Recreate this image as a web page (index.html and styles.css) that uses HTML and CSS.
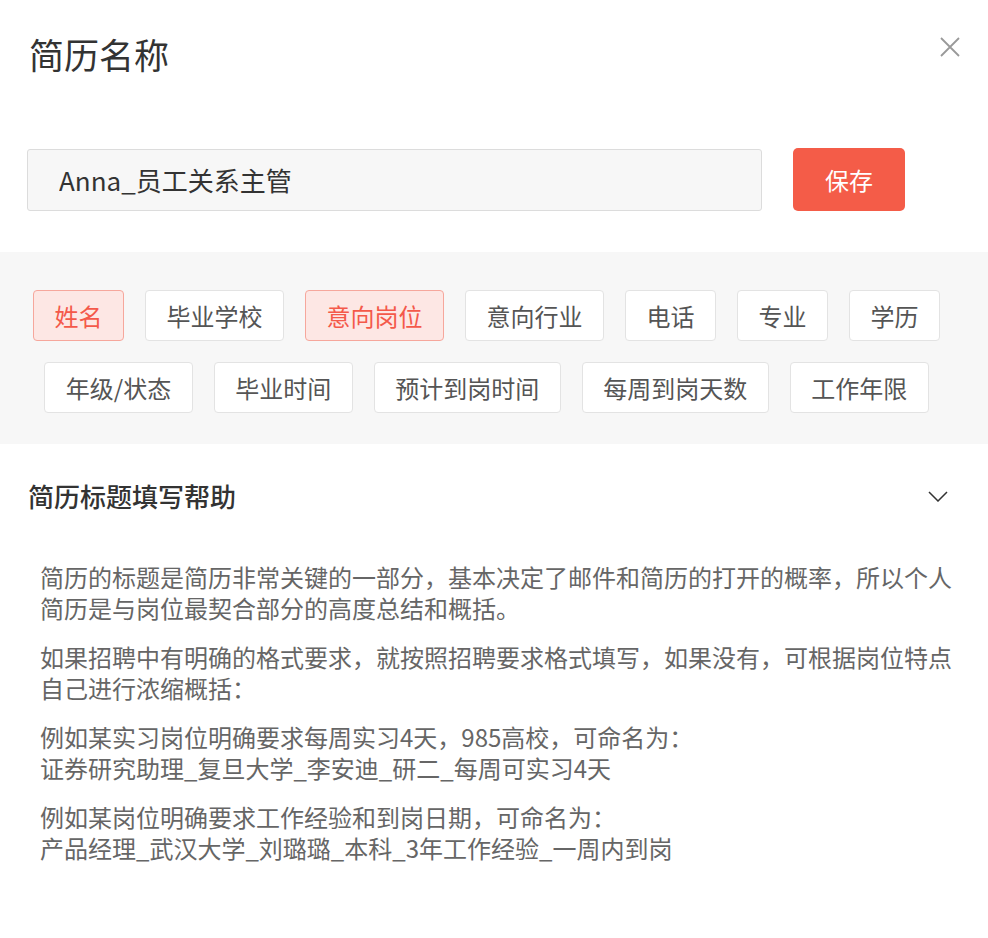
FILE: index.html
```html
<!DOCTYPE html>
<html lang="zh-CN">
<head>
  <meta charset="UTF-8">
  <title>简历名称</title>
  <link rel="stylesheet" href="styles.css">
</head>
<body>
  <div class="header">
    <h1 class="title">简历名称</h1>
    <svg class="close" width="20" height="20" viewBox="0 0 20 20">
      <path d="M1 1L19 19M19 1L1 19" stroke="#999" stroke-width="1.8" fill="none"/>
    </svg>
  </div>

  <div class="name-row">
    <input class="name-input" type="text" value="Anna_员工关系主管">
    <button class="save-btn" type="button">保存</button>
  </div>

  <div class="tags">
    <span class="tag active">姓名</span>
    <span class="tag">毕业学校</span>
    <span class="tag active">意向岗位</span>
    <span class="tag">意向行业</span>
    <span class="tag">电话</span>
    <span class="tag">专业</span>
    <span class="tag">学历</span>
    <span class="tag">年级/状态</span>
    <span class="tag">毕业时间</span>
    <span class="tag">预计到岗时间</span>
    <span class="tag">每周到岗天数</span>
    <span class="tag">工作年限</span>
  </div>

  <div class="help-head">
    <h2 class="help-title">简历标题填写帮助</h2>
    <svg class="chevron" width="20" height="11" viewBox="0 0 20 11">
      <path d="M1 1L10 10L19 1" stroke="#333" stroke-width="1.5" fill="none"/>
    </svg>
  </div>

  <div class="help-body">
    <p>简历的标题是简历非常关键的一部分，基本决定了邮件和简历的打开的概率，所以个人简历是与岗位最契合部分的高度总结和概括。</p>
    <p>如果招聘中有明确的格式要求，就按照招聘要求格式填写，如果没有，可根据岗位特点自己进行浓缩概括：</p>
    <p class="example">例如某实习岗位明确要求每周实习4天，985高校，可命名为：
证券研究助理_复旦大学_李安迪_研二_每周可实习4天</p>
    <p class="example">例如某岗位明确要求工作经验和到岗日期，可命名为：
产品经理_武汉大学_刘璐璐_本科_3年工作经验_一周内到岗</p>
  </div>
</body>
</html>
```

FILE: styles.css
```css
body {
  margin: 0;
  background: #fff;
  font-family: "Noto Sans CJK SC", "Noto Sans", sans-serif;
  color: #333;
}

.header {
  display: flex;
  justify-content: space-between;
  align-items: flex-start;
  padding: 29px 28px 0 29px;
}

.title {
  margin: 0;
  font-size: 35px;
  font-weight: normal;
  line-height: 49px;
  color: #333;
}

.close {
  margin-top: 8px;
}

.name-row {
  display: flex;
  align-items: center;
  margin-top: 70px;
  padding: 0 83px 0 27px;
}

.name-input {
  box-sizing: border-box;
  width: 735px;
  height: 62px;
  padding: 0 0 0 31px;
  border: 1px solid #dcdcdc;
  border-radius: 3px;
  background: #f7f7f7;
  font-family: "Noto Sans CJK SC", "Noto Sans", sans-serif;
  font-size: 26px;
  color: #333;
  outline: none;
}

.save-btn {
  width: 112px;
  height: 63px;
  margin-left: 31px;
  border: none;
  border-radius: 5px;
  background: #f45c48;
  color: #fff;
  font-family: "Noto Sans CJK SC", "Noto Sans", sans-serif;
  font-size: 24px;
  cursor: pointer;
}

.tags {
  display: flex;
  flex-wrap: wrap;
  justify-content: center;
  gap: 21px;
  margin-top: 41px;
  padding: 38px 34px 31px 19px;
  background: #f7f7f7;
}

.tag {
  box-sizing: border-box;
  height: 51px;
  padding: 0 20.5px;
  border: 1px solid #e3e3e3;
  border-radius: 4px;
  background: #fff;
  font-size: 24px;
  line-height: 49px;
  color: #555;
}

.tag.active {
  border-color: #f6a79c;
  background: #fde7e4;
  color: #f4594a;
}

.help-head {
  display: flex;
  justify-content: space-between;
  align-items: center;
  padding: 34px 40px 0 28px;
}

.help-title {
  margin: 0;
  font-size: 26px;
  font-weight: 500;
  line-height: 36px;
  color: #333;
}

.help-body {
  padding: 47px 28px 0 40px;
}

.help-body p {
  margin: 0 0 18px;
  font-size: 24px;
  line-height: 31px;
  color: #666;
}

.help-body .example {
  white-space: pre-line;
}
```
